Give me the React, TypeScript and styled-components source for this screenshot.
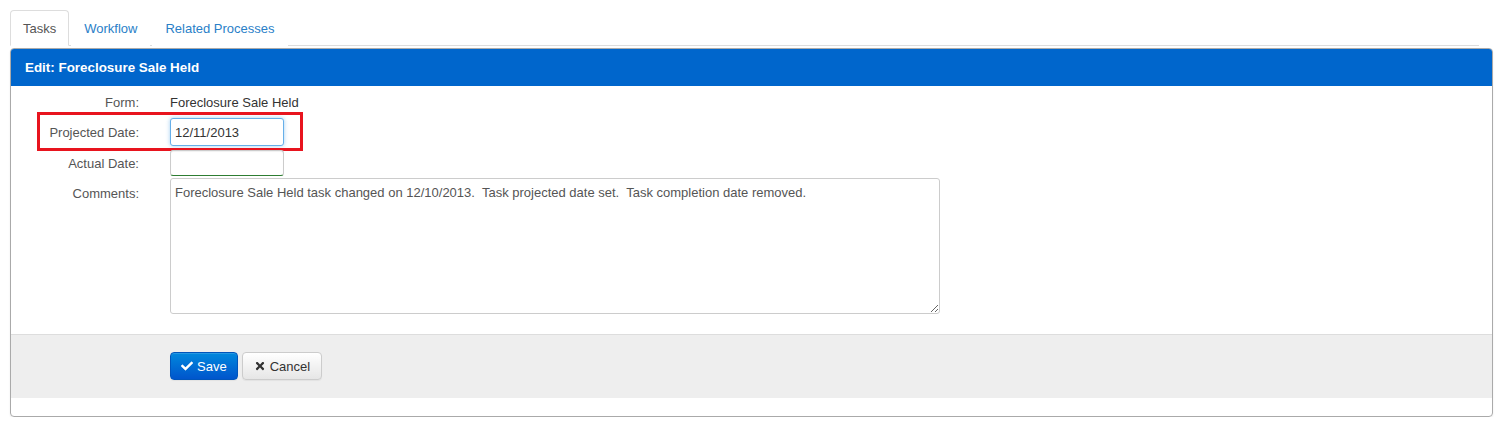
import React from 'react';
import styled, {createGlobalStyle} from 'styled-components';
import {FaCheck, FaTimes} from 'react-icons/fa';

const GlobalStyle = createGlobalStyle`
    html, body {
        margin: 0;
        padding: 0;
        background: #fff;
        font-family: "Liberation Sans", Arial, sans-serif;
        font-size: 13px;
        color: #333;
    }
`

export default function App() {
    return (
        <Page>
            <GlobalStyle />
            <TabBar>
                <Tab active>Tasks</Tab>
                <Tab>Workflow</Tab>
                <Tab>Related Processes</Tab>
            </TabBar>
            <Panel>
                <PanelHeader>Edit: Foreclosure Sale Held</PanelHeader>
                <PanelBody>
                    <FormGrid>
                        <Label top>Form:</Label>
                        <StaticValue>Foreclosure Sale Held</StaticValue>

                        <Label>Projected Date:</Label>
                        <FieldCell>
                            <DateInput focused defaultValue="12/11/2013" />
                            <Highlight />
                        </FieldCell>

                        <Label>Actual Date:</Label>
                        <FieldCell>
                            <DateInput changed defaultValue="" />
                        </FieldCell>

                        <Label top pad={6}>Comments:</Label>
                        <FieldCell tight>
                            <Comments defaultValue="Foreclosure Sale Held task changed on 12/10/2013.  Task projected date set.  Task completion date removed." />
                        </FieldCell>
                    </FormGrid>
                    <Actions>
                        <Button primary>
                            <FaCheck size={12} />
                            Save
                        </Button>
                        <Button>
                            <FaTimes size={12} />
                            Cancel
                        </Button>
                    </Actions>
                </PanelBody>
            </Panel>
        </Page>
    );
}

const Page = styled.div`
    padding: 10px 8px 0 10px;
`
const TabBar = styled.div`
    display: flex;
    margin-right: 14px;
    border-bottom: 1px solid #ddd;
    height: 35px;
    align-items: flex-end;
`
const Tab = styled.div<{active?: boolean}>`
    height: 36px;
    box-sizing: border-box;
    padding: 10px 12px 0 12px;
    margin-bottom: -1px;
    margin-right: 2px;
    font-size: 13px;
    line-height: 16px;
    color: ${props => props.active ? '#555' : '#2a80c8'};
    background: #fff;
    border: 1px solid ${props => props.active ? '#ddd' : 'transparent'};
    border-bottom-color: ${props => props.active ? '#fff' : 'transparent'};
    border-radius: 4px 4px 0 0;
`
const Panel = styled.div`
    margin-top: 2px;
    border: 1px solid #aaa;
    border-radius: 4px;
    overflow: hidden;
    box-shadow: 0 1px 2px rgba(0,0,0,0.08);
`
const PanelHeader = styled.div`
    background: #0066cc;
    color: #fff;
    font-size: 13.4px;
    font-weight: bold;
    height: 37px;
    line-height: 37px;
    padding-left: 14px;
`
const PanelBody = styled.div`
    padding-bottom: 18px;
`
const FormGrid = styled.div`
    display: grid;
    grid-template-columns: 128px 1fr;
    grid-template-rows: 19px auto auto auto;
    column-gap: 31px;
    row-gap: 4px;
    padding: 9px 0 20px 0;
    line-height: 15px;
`
const Label = styled.div<{top?: boolean; pad?: number}>`
    text-align: right;
    color: #555;
    align-self: ${props => props.top ? 'start' : 'center'};
    padding-top: ${props => props.pad || 0}px;
`
const StaticValue = styled.div`
    color: #333;
    align-self: start;
`
const FieldCell = styled.div<{tight?: boolean}>`
    position: relative;
    display: flex;
    margin-top: ${props => props.tight ? '-2px' : '0'};
`
const DateInput = styled.input<{focused?: boolean; changed?: boolean}>`
    width: 114px;
    height: ${props => props.focused ? '28px' : '26px'};
    box-sizing: border-box;
    padding: 0 4px;
    font-family: "Liberation Sans", Arial, sans-serif;
    font-size: 13px;
    color: #333;
    border: 1px solid ${props => props.focused ? '#66afe9' : '#ccc'};
    border-bottom-color: ${props => props.changed ? '#2e7d32' : props.focused ? '#66afe9' : '#ccc'};
    border-radius: 3px;
    box-shadow: ${props => props.focused ? '0 0 4px rgba(102,175,233,0.6)' : 'inset 0 1px 1px rgba(0,0,0,0.06)'};
    outline: none;
`
const Highlight = styled.div`
    position: absolute;
    left: -133px;
    top: -6px;
    width: 260px;
    height: 33px;
    border: 3px solid #e8141e;
    pointer-events: none;
`
const Comments = styled.textarea`
    width: 770px;
    height: 136px;
    box-sizing: border-box;
    padding: 6px 4px;
    font-family: "Liberation Sans", Arial, sans-serif;
    font-size: 13px;
    color: #555;
    border: 1px solid #ccc;
    border-radius: 3px;
    resize: both;
    outline: none;
`
const Actions = styled.div`
    display: flex;
    gap: 4px;
    background: #eee;
    border-top: 1px solid #ddd;
    height: 64px;
    box-sizing: border-box;
    padding: 17px 0 0 159px;
`
const Button = styled.button<{primary?: boolean}>`
    display: flex;
    align-items: center;
    gap: 4px;
    height: 28px;
    padding: 0 ${props => props.primary ? '10px' : '11px'};
    font-family: "Liberation Sans", Arial, sans-serif;
    font-size: 13px;
    color: ${props => props.primary ? '#fff' : '#333'};
    background: ${props => props.primary
        ? 'linear-gradient(#0088dd, #0055cc)'
        : 'linear-gradient(#fff, #e6e6e6)'};
    border: 1px solid ${props => props.primary ? '#0055bb' : '#ccc'};
    border-radius: 4px;
    box-shadow: inset 0 1px 0 rgba(255,255,255,0.15), 0 1px 1px rgba(0,0,0,0.05);
    cursor: pointer;
`
